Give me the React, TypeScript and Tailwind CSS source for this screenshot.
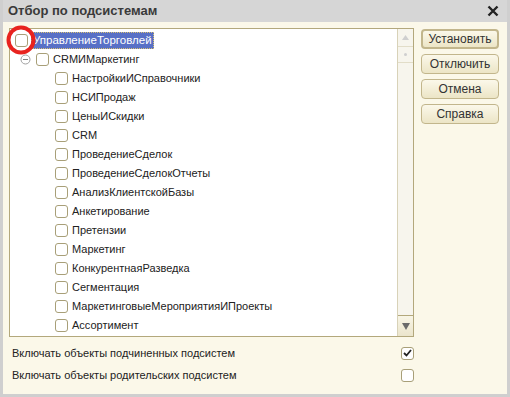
import React from "react";

const children = [
  "НастройкиИСправочники",
  "НСИПродаж",
  "ЦеныИСкидки",
  "CRM",
  "ПроведениеСделок",
  "ПроведениеСделокОтчеты",
  "АнализКлиентскойБазы",
  "Анкетирование",
  "Претензии",
  "Маркетинг",
  "КонкурентнаяРазведка",
  "Сегментация",
  "МаркетинговыеМероприятияИПроекты",
  "Ассортимент",
];

function Box({ checked = false }: { checked?: boolean }) {
  return (
    <div className="w-[13px] h-[13px] shrink-0 rounded-[3px] border border-[#a89f78] bg-white flex items-center justify-center">
      {checked && (
        <svg width="9" height="8" viewBox="0 0 9 8">
          <path d="M1 4 L3.5 6.5 L8 1" fill="none" stroke="#222" strokeWidth="1.8" />
        </svg>
      )}
    </div>
  );
}

function Btn({ label, def = false }: { label: string; def?: boolean }) {
  return (
    <div
      className={
        "h-[20px] w-[78px] rounded-[4px] flex items-center justify-center text-[12px] text-[#333] bg-gradient-to-b from-[#fbf8ea] to-[#ece5c6] " +
        (def ? "border-2 border-[#c2b68c]" : "border border-[#c2b68c]")
      }
    >
      {label}
    </div>
  );
}

export default function App() {
  return (
    <div
      className="w-[510px] h-[397px] bg-[#cfcfcf] flex flex-col px-[3px] pb-[3px] overflow-hidden"
      style={{ fontFamily: '"Liberation Sans", Arial, sans-serif' }}
    >
      <div className="h-[22px] flex items-center justify-between pl-[5px] pr-[5px] bg-[#d6d6d6]">
        <span className="text-[13px] font-bold text-[#3a3a3a]">Отбор по подсистемам</span>
        <svg width="12" height="12" viewBox="0 0 12 12" className="mr-[3px]">
          <path d="M1.5 1.5 L10.5 10.5 M10.5 1.5 L1.5 10.5" stroke="#222" strokeWidth="2.4" />
        </svg>
      </div>
      <div className="flex-1 bg-[#fbf8e9] flex flex-col pt-[6px] pl-[6px] pr-[8px]">
        <div className="flex gap-[7px]">
          <div className="relative w-[406px] h-[309px] border border-[#b3a87c] bg-white flex">
            <div className="flex-1 flex flex-col pt-[2px]">
              <div className="h-[19px] flex items-center pl-[5px] gap-[3px]">
                <Box />
                <span className="text-[11.5px] text-white bg-[#5870c6] border border-dotted border-[#d8c073] px-[1px] leading-[15px]">
                  УправлениеТорговлей
                </span>
              </div>
              <div className="h-[19px] flex items-center pl-[10px] gap-[4px]">
                <svg width="11" height="11" viewBox="0 0 11 11" className="mr-[1px]">
                  <circle cx="5.5" cy="5.5" r="4.5" fill="white" stroke="#a0a0a0" />
                  <path d="M3 5.5 H8" stroke="#808080" strokeWidth="1" />
                </svg>
                <Box />
                <span className="text-[11px] text-[#222]">CRMИМаркетинг</span>
              </div>
              {children.map((c) => (
                <div key={c} className="h-[19px] flex items-center pl-[45px] gap-[4px]">
                  <Box />
                  <span className="text-[11px] text-[#222]">{c}</span>
                </div>
              ))}
            </div>
            <div className="w-[16px] border-l border-[#d8d2b8] bg-[#f7f5ed] flex flex-col">
              <div className="h-[17px] flex items-center justify-center">
                <svg width="7" height="5" viewBox="0 0 7 5">
                  <path d="M0 5 L3.5 0 L7 5 Z" fill="#cfcfcf" />
                </svg>
              </div>
              <div className="h-[17px] border-t border-b border-[#e2ddc8] flex items-center justify-center">
                <div className="w-[3px] h-[3px] rounded-full bg-[#cfcfcf]" />
              </div>
              <div className="flex-1" />
              <div className="h-[21px] border-t border-[#b3a87c] bg-gradient-to-b from-[#f8f5e6] to-[#ebe5cc] flex items-center justify-center">
                <svg width="8" height="7" viewBox="0 0 8 7">
                  <path d="M0 0 L8 0 L4 7 Z" fill="#6a6a6a" />
                </svg>
              </div>
            </div>
            <svg
              width="32"
              height="32"
              viewBox="0 0 32 32"
              className="absolute left-[-5px] top-[-5px]"
            >
              <circle cx="16" cy="16" r="12.5" fill="none" stroke="#e8231f" strokeWidth="4" />
            </svg>
          </div>
          <div className="flex flex-col gap-[5px] pt-[1px]">
            <Btn label="Установить" def />
            <Btn label="Отключить" />
            <Btn label="Отмена" />
            <Btn label="Справка" />
          </div>
        </div>
        <div className="w-[406px] flex flex-col mt-[5px]">
          <div className="h-[22px] flex items-center justify-between pl-[3px] pr-[1px]">
            <span className="text-[11px] text-[#222]">Включать объекты подчиненных подсистем</span>
            <Box checked />
          </div>
          <div className="h-[22px] flex items-center justify-between pl-[3px] pr-[1px]">
            <span className="text-[11px] text-[#222]">Включать объекты родительских подсистем</span>
            <Box />
          </div>
        </div>
      </div>
    </div>
  );
}
